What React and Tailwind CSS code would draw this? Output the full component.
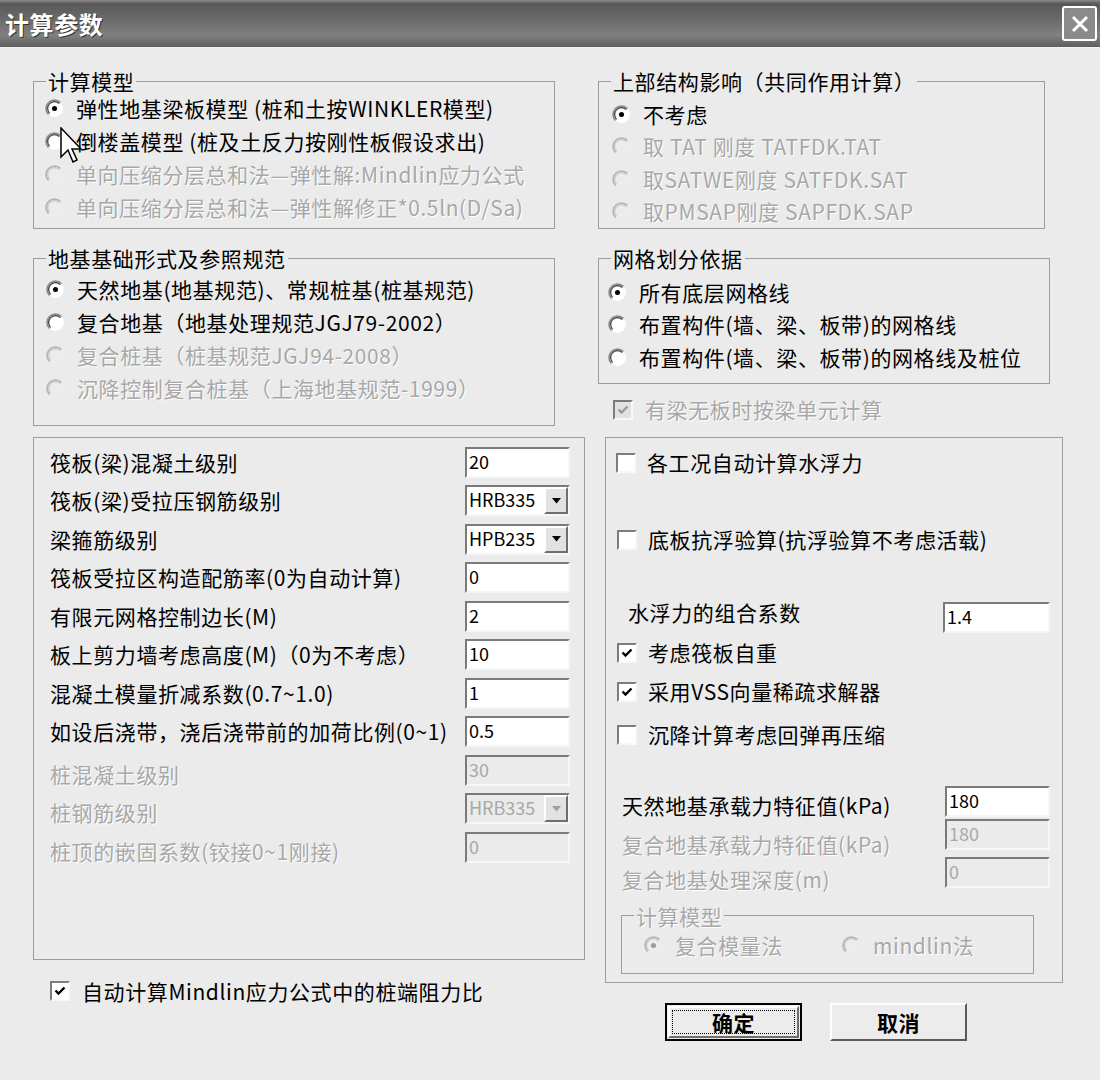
const DIS = "text-[#a8a8a8] [text-shadow:1px_1px_0_#ffffff]"

function Radio({ checked, disabled }) {
  const outer = disabled ? '#b4b4b4' : '#8a8a8a'
  const inner = disabled ? '#c8c8c8' : '#404040'
  return (
    <svg width="19" height="19" viewBox="0 0 18 18" className="shrink-0">
      <circle cx="9" cy="9" r="8" fill={disabled ? '#ececec' : '#ffffff'} />
      <path d="M3.34 14.66 A8 8 0 0 1 14.66 3.34" fill="none" stroke={outer} strokeWidth="1.6" />
      <path d="M4.4 13.6 A6.5 6.5 0 0 1 13.6 4.4" fill="none" stroke={inner} strokeWidth="1.2" />
      {checked && <circle cx="9" cy="9" r="2.4" fill={disabled ? '#9a9a9a' : '#000000'} />}
    </svg>
  )
}

function Check({ checked, disabled }) {
  return (
    <span className={`w-[20px] h-[20px] shrink-0 flex items-center justify-center border-2 border-t-[#7c7c7c] border-l-[#7c7c7c] border-r-[#f8f8f8] border-b-[#f8f8f8] ${disabled ? 'bg-[#e2e2e2]' : 'bg-white'}`}>
      {checked && (
        <svg width="12" height="12" viewBox="0 0 12 12">
          <path d="M1.5 5.5 L4.5 8.5 L10.5 2.5" fill="none" stroke={disabled ? '#9a9a9a' : '#000000'} strokeWidth="2.4" />
        </svg>
      )}
    </span>
  )
}

function Field({ value, disabled, combo, w = 'w-[105px]' }) {
  return (
    <div className={`${w} h-[31px] shrink-0 flex border-2 border-t-[#7a7a7a] border-l-[#7a7a7a] border-r-[#f6f6f6] border-b-[#f6f6f6] tracking-normal ${disabled ? 'bg-[#ebebeb]' : 'bg-white'}`}>
      <span className={`flex-1 pl-[2px] leading-[25px] text-[18px] ${disabled ? 'text-[#a8a8a8]' : 'text-black'}`}>{value}</span>
      {combo && (
        <span className="w-[24px] h-full flex items-center justify-center bg-[#e2e2e2] border-2 border-t-[#ffffff] border-l-[#ffffff] border-r-[#6e6e6e] border-b-[#6e6e6e]">
          <svg width="9" height="6" viewBox="0 0 9 6">
            <path d="M0 0 L9 0 L4.5 5.5 Z" fill={disabled ? '#a0a0a0' : '#000000'} />
          </svg>
        </span>
      )}
    </div>
  )
}

function RadioRow({ label, checked, disabled, h = 'h-[33px]' }) {
  return (
    <div className={`${h} flex items-center gap-[12px]`}>
      <Radio checked={checked} disabled={disabled} />
      <span className={`leading-[29px] whitespace-nowrap ${disabled ? DIS : ''}`}>{label}</span>
    </div>
  )
}

// fieldset: padding goes on the inner div so the legend stays put
function Group({ title, className, inner, children, disabled }) {
  return (
    <fieldset className={`border border-[#9c9c9c] ${className}`}>
      <legend className={`ml-[12px] px-[2px] leading-[22px] ${disabled ? DIS : ''}`}>{title}</legend>
      <div className={inner}>{children}</div>
    </fieldset>
  )
}

const paramRows = [
  { label: '筏板(梁)混凝土级别', value: '20' },
  { label: '筏板(梁)受拉压钢筋级别', value: 'HRB335', combo: true },
  { label: '梁箍筋级别', value: 'HPB235', combo: true },
  { label: '筏板受拉区构造配筋率(0为自动计算)', value: '0' },
  { label: '有限元网格控制边长(M)', value: '2' },
  { label: '板上剪力墙考虑高度(M)（0为不考虑）', value: '10' },
  { label: '混凝土模量折减系数(0.7~1.0)', value: '1' },
  { label: '如设后浇带，浇后浇带前的加荷比例(0~1)', value: '0.5' },
  { label: '桩混凝土级别', value: '30', disabled: true },
  { label: '桩钢筋级别', value: 'HRB335', combo: true, disabled: true },
  { label: '桩顶的嵌固系数(铰接0~1刚接)', value: '0', disabled: true },
]

export default function App() {
  return (
    <div className="relative w-[1100px] h-[1080px] bg-[#ebebeb] text-black text-[21px] tracking-[0.6px] font-['Noto_Sans_CJK_SC',sans-serif] overflow-hidden">
      {/* title bar */}
      <div className="h-[48px] flex items-center justify-between pl-[5px] pr-[3px] border-b border-[#f4f4f4] bg-[linear-gradient(to_bottom,#8c8c8c_0%,#585858_8%,#6a6a6a_40%,#808080_75%,#5e5e5e_100%)]">
        <span className="text-white font-bold text-[24px] leading-[30px] [text-shadow:1px_1px_0_#333333]">计算参数</span>
        <span className="w-[35px] h-[35px] flex items-center justify-center rounded-[3px] border-2 border-white bg-[#8a8a8a]">
          <svg width="20" height="20" viewBox="0 0 20 20">
            <path d="M3 3 L17 17 M17 3 L3 17" stroke="#ffffff" strokeWidth="3" />
          </svg>
        </span>
      </div>

      <div className="flex pt-[22px]">
        {/* left column */}
        <div className="ml-[33px] w-[552px] flex flex-col">
          <Group title="计算模型" className="w-[522px]" inner="pl-[11px] pb-[4px]">
            <RadioRow checked label="弹性地基梁板模型  (桩和土按WINKLER模型)" />
            <RadioRow label="倒楼盖模型  (桩及土反力按刚性板假设求出)" />
            <RadioRow disabled label="单向压缩分层总和法—弹性解:Mindlin应力公式" />
            <RadioRow disabled label="单向压缩分层总和法—弹性解修正*0.5ln(D/Sa)" />
          </Group>

          <Group title="地基基础形式及参照规范" className="mt-[18px] w-[522px]" inner="pl-[12px] pt-[4px] pb-[20px]">
            <RadioRow checked label="天然地基(地基规范)、常规桩基(桩基规范)" />
            <RadioRow label="复合地基（地基处理规范JGJ79-2002）" />
            <RadioRow disabled label="复合桩基（桩基规范JGJ94-2008）" />
            <RadioRow disabled label="沉降控制复合桩基（上海地基规范-1999）" />
          </Group>

          <div className="mt-[11px] h-[523px] border border-[#9c9c9c] pt-[5px] pl-[16px] pr-[14px]">
            {paramRows.map((r, i) => (
              <div key={i} className="h-[38.5px] flex items-center">
                <span className={`flex-1 leading-[29px] whitespace-nowrap ${r.disabled ? DIS + ' mt-[8px]' : ''}`}>{r.label}</span>
                <Field value={r.value} combo={r.combo} disabled={r.disabled} />
              </div>
            ))}
          </div>

          <div className="mt-[16px] h-[30px] flex items-center gap-[12px] ml-[17px]">
            <Check checked />
            <span className="leading-[29px] whitespace-nowrap">自动计算Mindlin应力公式中的桩端阻力比</span>
          </div>
        </div>

        {/* right column */}
        <div className="ml-[13px] w-[465px] flex flex-col">
          <Group title="上部结构影响（共同作用计算）" className="w-[447px]" inner="pl-[13px] pt-[6px]">
            <RadioRow h="h-[32.5px]" checked label="不考虑" />
            <RadioRow h="h-[32.5px]" disabled label="取 TAT 刚度 TATFDK.TAT" />
            <RadioRow h="h-[32.5px]" disabled label="取SATWE刚度 SATFDK.SAT" />
            <RadioRow h="h-[32.5px]" disabled label="取PMSAP刚度 SAPFDK.SAP" />
          </Group>

          <Group title="网格划分依据" className="mt-[18px] w-[452px]" inner="pl-[9px] pt-[7px] pb-[9px]">
            <RadioRow h="h-[32.5px]" checked label="所有底层网格线" />
            <RadioRow h="h-[32.5px]" label="布置构件(墙、梁、板带)的网格线" />
            <RadioRow h="h-[32.5px]" label="布置构件(墙、梁、板带)的网格线及桩位" />
          </Group>

          <div className="mt-[13px] h-[26px] ml-[15px] flex items-center gap-[12px]">
            <Check checked disabled />
            <span className={`leading-[29px] ${DIS}`}>有梁无板时按梁单元计算</span>
          </div>

          <div className="mt-[14px] ml-[7px] w-[458px] h-[546px] border border-[#9c9c9c] flex flex-col pt-[9px] pr-[12px]">
            <div className="h-[32px] flex items-center gap-[11px] pl-[10px]">
              <Check />
              <span className="leading-[29px]">各工况自动计算水浮力</span>
            </div>
            <div className="mt-[45px] h-[32px] flex items-center gap-[11px] pl-[11px]">
              <Check />
              <span className="leading-[29px]">底板抗浮验算(抗浮验算不考虑活载)</span>
            </div>
            <div className="mt-[46px] h-[35px] flex items-start pl-[22px]">
              <span className="flex-1 leading-[29px] -mt-[4px]">水浮力的组合系数</span>
              <Field value="1.4" w="w-[107px]" />
            </div>
            <div className="h-[32px] flex items-center gap-[11px] pl-[11px]">
              <Check checked />
              <span className="leading-[29px]">考虑筏板自重</span>
            </div>
            <div className="mt-[7px] h-[32px] flex items-center gap-[11px] pl-[11px]">
              <Check checked />
              <span className="leading-[29px]">采用VSS向量稀疏求解器</span>
            </div>
            <div className="mt-[11px] h-[32px] flex items-center gap-[11px] pl-[11px]">
              <Check />
              <span className="leading-[29px]">沉降计算考虑回弹再压缩</span>
            </div>
            <div className="mt-[35px] h-[33px] flex items-start pl-[16px]">
              <span className="flex-1 leading-[29px] mt-[5px]">天然地基承载力特征值(kPa)</span>
              <Field value="180" w="w-[105px]" />
            </div>
            <div className="h-[33px] flex items-start pl-[16px]">
              <span className={`flex-1 leading-[29px] mt-[11px] ${DIS}`}>复合地基承载力特征值(kPa)</span>
              <Field value="180" disabled w="w-[105px]" />
            </div>
            <div className="mt-[5px] h-[35px] flex items-start pl-[16px]">
              <span className={`flex-1 leading-[29px] mt-[8px] ${DIS}`}>复合地基处理深度(m)</span>
              <Field value="0" disabled w="w-[105px]" />
            </div>

            <Group disabled title="计算模型" className="mt-[13px] ml-[15px] w-[413px]" inner="pt-[1px] pb-[9px] pl-[22px]">
              <div className="h-[36px] flex items-center">
                <div className="w-[198px] flex items-center gap-[12px]">
                  <Radio checked disabled />
                  <span className={`leading-[29px] ${DIS}`}>复合模量法</span>
                </div>
                <div className="flex items-center gap-[12px]">
                  <Radio disabled />
                  <span className={`leading-[29px] ${DIS}`}>mindlin法</span>
                </div>
              </div>
            </Group>
          </div>

          {/* buttons */}
          <div className="mt-[20px] flex gap-[28px] ml-[67px]">
            <div className="w-[137px] h-[38px] border-2 border-black bg-[#ececec] p-[1px]">
              <div className="h-full border-2 border-t-white border-l-white border-r-[#6e6e6e] border-b-[#6e6e6e] p-[2px]">
                <div className="h-full border border-dotted border-black flex items-center justify-center leading-[24px] font-bold">确定</div>
              </div>
            </div>
            <div className="w-[137px] h-[38px] border-2 border-t-white border-l-white border-r-[#5a5a5a] border-b-[#5a5a5a] bg-[#ececec] flex items-center justify-center font-bold leading-[24px]">
              取消
            </div>
          </div>
        </div>
      </div>

      {/* mouse pointer */}
      <svg className="absolute left-[60px] top-[127px]" width="22" height="38" viewBox="0 0 22 38">
        <path d="M1 1 L1 30 L8 23 L13 35 L17 33 L12 22 L21 22 Z" fill="#ffffff" stroke="#000000" strokeWidth="1.5" />
      </svg>
    </div>
  )
}
